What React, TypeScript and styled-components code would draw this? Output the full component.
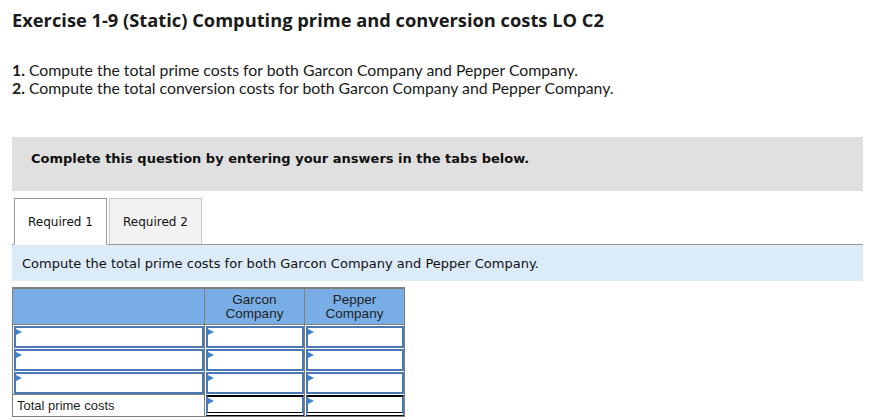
import React from 'react';
import styled, { createGlobalStyle } from 'styled-components';

const GlobalStyle = createGlobalStyle`
  body {
    margin: 0;
    background: #ffffff;
    color: #1a1a1a;
  }
`;

const Page = styled.div`
  width: 851px;
  padding: 8px 7px 0 12px;
`;

const Title = styled.h1`
  margin: 0;
  font-family: 'Open Sans', Lato, sans-serif;
  font-weight: 700;
  font-size: 18.3px;
  line-height: 24px;
  color: #1a1a1a;
`;

const Questions = styled.div`
  margin-top: 29px;
  font-family: Lato, 'Open Sans', sans-serif;
  font-size: 15.8px;
  line-height: 18px;
  color: #1a1a1a;

  b {
    font-weight: 700;
  }
`;

const Notice = styled.div`
  margin-top: 40px;
  height: 54px;
  box-sizing: border-box;
  padding: 14px 19px 0;
  background: #e0e0e0;
  font-family: 'DejaVu Sans', Verdana, sans-serif;
  font-weight: 700;
  font-size: 13px;
  line-height: 16px;
  color: #111;
`;

const TabBar = styled.div`
  margin-top: 7px;
  display: flex;
  gap: 2px;
  padding-left: 2px;
  border-bottom: 1px solid #9a9a9a;
  height: 47px;
  box-sizing: border-box;
`;

const Tab = styled.div<{ $active?: boolean }>`
  width: 93px;
  box-sizing: border-box;
  display: flex;
  align-items: center;
  justify-content: center;
  font-family: 'DejaVu Sans', Verdana, sans-serif;
  font-size: 12px;
  color: #111;
  border: 1px solid ${(p) => (p.$active ? '#9a9a9a' : '#c8c8c8')};
  border-bottom: ${(p) => (p.$active ? '1px solid #ffffff' : 'none')};
  background: ${(p) => (p.$active ? '#ffffff' : '#f2f2f2')};
  height: ${(p) => (p.$active ? '47px' : '46px')};
`;

const Instruction = styled.div`
  height: 36px;
  display: flex;
  align-items: center;
  padding-left: 10px;
  background: #dbebf8;
  font-family: 'DejaVu Sans', Verdana, sans-serif;
  font-size: 13px;
  color: #111;
`;

const Grid = styled.div`
  margin-top: 6px;
  width: 393px;
  box-sizing: border-box;
  display: grid;
  grid-template-columns: 192px 100px 99px;
  grid-template-rows: 36px repeat(3, 23px) 22px;
  border: 1px solid #7f7f7f;
  border-top-width: 2px;
  font-family: 'Liberation Sans', Arial, sans-serif;
  font-size: 13px;
`;

const HeadCell = styled.div<{ $last?: boolean }>`
  background: #78ade6;
  border-right: ${(p) => (p.$last ? 'none' : '1px solid #7f7f7f')};
  border-bottom: 1px solid #7f7f7f;
  display: flex;
  align-items: center;
  justify-content: center;
  text-align: center;
  font-size: 13.5px;
  line-height: 14px;
  color: #1f1f1f;
`;

const BodyCell = styled.div<{ $last?: boolean }>`
  border-right: ${(p) => (p.$last ? 'none' : '1px solid #7f7f7f')};
  padding: 1px 0 0 1px;
  box-sizing: border-box;
`;

const Input = styled.div<{ $total?: boolean }>`
  position: relative;
  height: 100%;
  box-sizing: border-box;
  background: #ffffff;
  border: 2px solid #4a78b2;
  ${(p) =>
    p.$total &&
    `
    border-top: 2px solid #000;
    border-bottom: 4px double #000;
  `}

  &::before {
    content: '';
    position: absolute;
    left: 0;
    top: 1px;
    border-left: 6px solid #3f80d6;
    border-top: 3px solid transparent;
    border-bottom: 3px solid transparent;
  }
`;

const LabelCell = styled.div`
  border-right: 1px solid #7f7f7f;
  border-top: 1px solid #7f7f7f;
  display: flex;
  align-items: center;
  padding-left: 4px;
  color: #1f1f1f;
`;

const App: React.FC = () => {
  const rows = [0, 1, 2];

  return (
    <>
      <GlobalStyle />
      <Page>
        <Title>Exercise 1-9 (Static) Computing prime and conversion costs LO C2</Title>
        <Questions>
          <div>
            <b>1.</b> Compute the total prime costs for both Garcon Company and Pepper Company.
          </div>
          <div>
            <b>2.</b> Compute the total conversion costs for both Garcon Company and Pepper Company.
          </div>
        </Questions>
        <Notice>Complete this question by entering your answers in the tabs below.</Notice>
        <TabBar>
          <Tab $active>Required 1</Tab>
          <Tab>Required 2</Tab>
        </TabBar>
        <Instruction>Compute the total prime costs for both Garcon Company and Pepper Company.</Instruction>
        <Grid>
          <HeadCell />
          <HeadCell>
            Garcon
            <br />
            Company
          </HeadCell>
          <HeadCell $last>
            Pepper
            <br />
            Company
          </HeadCell>
          {rows.map((r) => (
            <React.Fragment key={r}>
              <BodyCell>
                <Input />
              </BodyCell>
              <BodyCell>
                <Input />
              </BodyCell>
              <BodyCell $last>
                <Input />
              </BodyCell>
            </React.Fragment>
          ))}
          <LabelCell>Total prime costs</LabelCell>
          <BodyCell>
            <Input $total />
          </BodyCell>
          <BodyCell $last>
            <Input $total />
          </BodyCell>
        </Grid>
      </Page>
    </>
  );
};

export default App;
